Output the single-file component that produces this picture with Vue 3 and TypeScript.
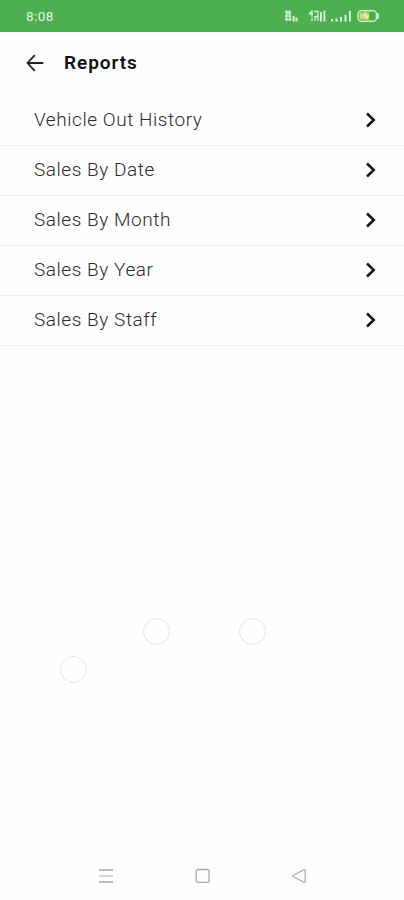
<script setup lang="ts">
interface Report {
  id: string
  label: string
}

const reports: Report[] = [
  { id: 'vehicle', label: 'Vehicle Out History' },
  { id: 'date', label: 'Sales By Date' },
  { id: 'month', label: 'Sales By Month' },
  { id: 'year', label: 'Sales By Year' },
  { id: 'staff', label: 'Sales By Staff' },
]
</script>

<template>
  <div class="screen">
    <div class="status">
      <span class="time">8:08</span>
      <svg class="indicators" width="98" height="16" viewBox="0 0 98 16" aria-hidden="true">
        <g fill="none" stroke="#d3efd4" stroke-width="1.5">
          <path d="M1 3.500h6M2 5.500h5M1 8h6M1 11.500h6M2.500 3v10M6 3v10" />
          <path d="M9.500 8v5.500M12.500 9.500v4" stroke-width="2.200" />
          <path d="M25 6l3-3v6M25 6h4M30 3.500h4v5h-3M28 10v3M31 8v5M34 7v6" stroke-width="1.300" />
        </g>
        <g fill="#e0f4e0">
          <rect x="36" y="4" width="1.800" height="9.500" />
          <rect x="39.500" y="2.500" width="1.800" height="11" />
          <rect x="47" y="11" width="2" height="2.500" />
          <rect x="51.500" y="10.500" width="2" height="3" />
          <rect x="56" y="9" width="2" height="4.500" />
          <rect x="60.500" y="7" width="2" height="6.500" />
          <rect x="65" y="3" width="1.800" height="10.500" />
        </g>
        <rect x="74" y="2.800" width="18.500" height="10.400" rx="3.500" fill="none" stroke="#c9ecc8" stroke-width="1.500" />
        <path d="M76.500 4.500h8.500v7h-8.500q-1 0-1-1v-5q0-1 1-1z" fill="#cbd86b" />
        <path d="M82 4l-2 4h4l-2 4" fill="none" stroke="#edf5cf" stroke-width="1.200" />
        <path d="M94 6v4" stroke="#c9ecc8" stroke-width="1.800" stroke-linecap="round" />
      </svg>
    </div>

    <header class="header">
      <button class="back" type="button" aria-label="Back">
        <svg width="20" height="18" viewBox="0 0 20 18">
          <path d="M9.800 1.200L2.500 9l7.300 7.800M2.500 9h15.800" fill="none" stroke="#222" stroke-width="1.800" />
        </svg>
      </button>
      <h1 class="title">Reports</h1>
    </header>

    <ul class="list">
      <li v-for="report in reports" :key="report.id" class="row">
        <span class="label">{{ report.label }}</span>
        <svg class="chevron" width="12" height="16" viewBox="0 0 12 16" aria-hidden="true">
          <path d="M2 1.500L8.800 8 2 14.500" fill="none" stroke="#161616" stroke-width="2.500" />
        </svg>
      </li>
    </ul>

    <main class="canvas">
      <span class="ring one"></span>
      <span class="ring two"></span>
      <span class="ring three"></span>
    </main>

    <nav class="nav">
      <svg width="16" height="16" viewBox="0 0 16 16">
        <path d="M1 2h14M1 14h14" stroke="#a9a9a9" stroke-width="1.300" />
        <path d="M1 8h14" stroke="#c8c8c8" stroke-width="1.500" />
      </svg>
      <svg width="16" height="16" viewBox="0 0 16 16">
        <rect x="1.200" y="1.500" width="12.800" height="12.800" rx="2" fill="none" stroke="#aaa" stroke-width="1.300" />
      </svg>
      <svg width="16" height="16" viewBox="0 0 16 16">
        <path d="M13 1.800L2 7.500q-1 .5 0 1L13 14.200q1.200.4 1.200-1V2.800q0-1.400-1.200-1z" fill="none" stroke="#aaa" stroke-width="1.200" />
      </svg>
    </nav>
  </div>
</template>

<style>
body {
  background: #fefefe;
}
</style>

<style scoped>
.screen {
  width: 100%;
  height: 900px;
  display: flex;
  flex-direction: column;
  overflow: hidden;
  background: #fefefe;
  font-family: Roboto, 'Liberation Sans', sans-serif;
}
.status {
  height: 32px;
  flex: none;
  box-sizing: border-box;
  display: flex;
  align-items: center;
  justify-content: space-between;
  padding: 0 22px 0 26px;
  background: #4caf50;
}
.time {
  font-size: 13.5px;
  letter-spacing: 0.4px;
  color: #e3f5e3;
}
.header {
  height: 64px;
  flex: none;
  box-sizing: border-box;
  display: flex;
  align-items: center;
  padding: 0 0 2px 25px;
}
.back {
  display: flex;
  margin: 0;
  padding: 0;
  border: 0;
  background: none;
}
.title {
  margin: 0 0 0 19px;
  font-size: 19px;
  line-height: 24px;
  font-weight: 600;
  letter-spacing: 0.95px;
  color: #111;
}
.list {
  margin: 0;
  padding: 0;
  list-style: none;
}
.row {
  height: 50px;
  box-sizing: border-box;
  display: flex;
  align-items: center;
  justify-content: space-between;
  padding: 0 27px 1px 34px;
  border-bottom: 1px solid #ececec;
}
.label {
  font-size: 19px;
  line-height: 24px;
  font-weight: 300;
  letter-spacing: 0.55px;
  color: #2b2b2b;
}
.canvas {
  flex: 1;
  position: relative;
}
.ring {
  position: absolute;
  width: 27px;
  height: 27px;
  box-sizing: border-box;
  border: 1px solid #e4e4e4;
  border-radius: 50%;
}
.one {
  left: 143px;
  top: 272px;
}
.two {
  left: 239px;
  top: 272px;
}
.three {
  left: 60px;
  top: 310px;
}
.nav {
  height: 49px;
  flex: none;
  display: flex;
  justify-content: space-between;
  align-items: center;
  padding: 0 97px 0 98px;
}
</style>
